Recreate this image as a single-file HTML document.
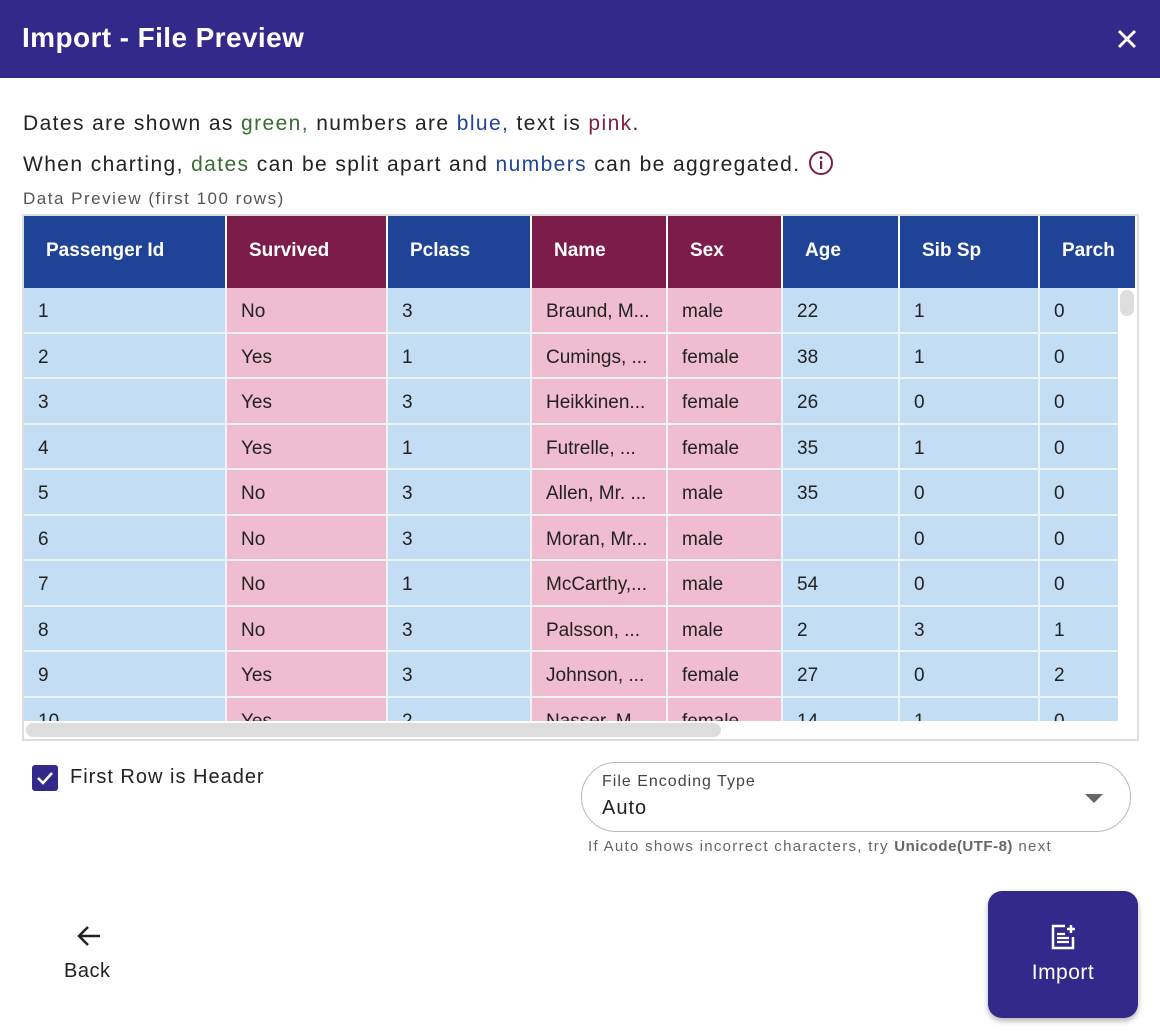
<!DOCTYPE html>
<html><head><style>
*{box-sizing:border-box;margin:0;padding:0}
body{width:1160px;height:1034px;background:#fff;font-family:"Liberation Sans",sans-serif;position:relative;overflow:hidden;color:#222}
.top{position:absolute;left:0;top:0;width:1160px;height:78px;background:#33298a;color:#fff;font-size:28px;font-weight:bold;padding:22px 0 0 22px;letter-spacing:0.4px}
.x{position:absolute;right:22px;top:28px;}
.p{position:absolute;left:23px;font-size:21px;color:#222;letter-spacing:1.4px;white-space:nowrap}
.g{color:#3a6b35}.b{color:#1f4497}.k{color:#7b1c4a}
.tbl{position:absolute;left:22px;top:214px;width:1117px;height:527px;border:2px solid #ddd;overflow:hidden}
.row{position:absolute;left:0;height:45.5px;width:1100px}
.c{position:absolute;top:0;height:100%;border-right:2px solid #eef3f8;border-bottom:2px solid #eef3f8;font-size:19px;padding:13px 0 0 14px;white-space:nowrap;overflow:hidden}
.h .c{font-weight:bold;color:#fff;padding-top:24px;padding-left:22px;border-color:#fff;border-bottom:none}
.B{background:#c3ddf5}.P{background:#f0bccf}
.h .B{background:#1f4497}.h .P{background:#7b1c4a}
</style></head><body>
<div class="top">Import - File Preview
<svg class="x" width="22" height="22" viewBox="0 0 22 22"><path d="M3 3L19 19M19 3L3 19" stroke="#fff" stroke-width="3"/></svg></div>
<div class="p" style="top:112px">Dates are shown as <span class="g">green,</span> numbers are <span class="b">blue,</span> text is <span class="k">pink</span>.</div>
<div class="p" style="top:150px">When charting, <span class="g">dates</span> can be split apart and <span class="b">numbers</span> can be aggregated.
<svg width="26" height="26" viewBox="0 0 26 26" style="vertical-align:-5px;margin-left:0px"><circle cx="13" cy="13" r="11" fill="none" stroke="#7b1c4a" stroke-width="2"/><rect x="12" y="11" width="2.2" height="8" fill="#7b1c4a"/><circle cx="13.1" cy="7.8" r="1.4" fill="#7b1c4a"/></svg></div>
<div class="p" style="top:189px;font-size:17px;color:#555;letter-spacing:1.5px">Data Preview (first 100 rows)</div>
<div class="tbl" id="t"></div>
<script>
var cols=[[0,203,'B'],[203,161,'P'],[364,144,'B'],[508,136,'P'],[644,115,'P'],[759,117,'B'],[876,140,'B'],[1016,80,'B']];
var hd=['Passenger Id','Survived','Pclass','Name','Sex','Age','Sib Sp','Parch'];
var d=[['1','No','3','Braund, M...','male','22','1','0'],['2','Yes','1','Cumings, ...','female','38','1','0'],['3','Yes','3','Heikkinen...','female','26','0','0'],['4','Yes','1','Futrelle, ...','female','35','1','0'],['5','No','3','Allen, Mr. ...','male','35','0','0'],['6','No','3','Moran, Mr...','male','','0','0'],['7','No','1','McCarthy,...','male','54','0','0'],['8','No','3','Palsson, ...','male','2','3','1'],['9','Yes','3','Johnson, ...','female','27','0','2'],['10','Yes','2','Nasser, M...','female','14','1','0']];
var h='<div class="row h" style="top:0;height:72px;width:1117px">';
cols.forEach(function(c,i){h+='<div class="c '+c[2]+'" style="left:'+c[0]+'px;width:'+(i==7?97:c[1])+'px">'+hd[i]+'</div>'});
h+='</div>';
d.forEach(function(r,j){h+='<div class="row" style="top:'+(72+j*45.5)+'px">';cols.forEach(function(c,i){h+='<div class="c '+c[2]+'" style="left:'+c[0]+'px;width:'+c[1]+'px">'+r[i]+'</div>'});h+='</div>'});
h+='<div style="position:absolute;left:1094px;top:72px;width:19px;height:433px;background:#fff"><div style="margin:2px 0 0 2px;width:14px;height:26px;border-radius:7px;background:#ddd"></div></div>';
h+='<div style="position:absolute;left:0;top:505px;width:1117px;height:20px;background:#fff"><div style="margin:2px 0 0 2px;width:695px;height:14px;border-radius:7px;background:#ddd"></div></div>';
document.getElementById('t').innerHTML=h;
</script>
<div style="position:absolute;left:32px;top:765px;width:26px;height:26px;background:#33298a;border-radius:3px"><svg width="26" height="26"><path d="M6 13L11 18L20 8" stroke="#fff" stroke-width="2.5" fill="none"/></svg></div>
<div class="p" style="left:70px;top:766px;font-size:20px;letter-spacing:1px">First Row is Header</div>
<div style="position:absolute;left:581px;top:762px;width:550px;height:70px;border:1px solid #bbb;border-radius:35px">
<div style="position:absolute;left:20px;top:10px;font-size:16px;color:#444;letter-spacing:1px">File Encoding Type</div>
<div style="position:absolute;left:20px;top:34px;font-size:20px;color:#222;letter-spacing:1px">Auto</div>
<div style="position:absolute;right:27px;top:31px;border-left:9px solid transparent;border-right:9px solid transparent;border-top:9px solid #666"></div></div>
<div style="position:absolute;left:588px;top:838px;font-size:15px;color:#666;letter-spacing:1.3px;white-space:nowrap">If Auto shows incorrect characters, try <b style="letter-spacing:0.5px">Unicode(UTF-8)</b> next</div>
<svg style="position:absolute;left:76px;top:924px" width="26" height="24"><path d="M24 12H3M12 3L3 12L12 21" stroke="#222" stroke-width="2.5" fill="none"/></svg>
<div class="p" style="left:64px;top:960px;font-size:20px;letter-spacing:0.5px">Back</div>
<div style="position:absolute;left:988px;top:891px;width:150px;height:127px;background:#33298a;border-radius:14px;box-shadow:0 3px 6px rgba(0,0,0,.3);color:#fff;text-align:center">
<svg style="margin-top:32px" width="28" height="28" viewBox="0 0 28 28"><path d="M16 3H4V25H24V14" stroke="#fff" stroke-width="2.5" fill="none"/><path d="M8 11H16M8 15H20M8 19H20" stroke="#fff" stroke-width="2.2"/><path d="M22 2V10M18 6H26" stroke="#fff" stroke-width="2.5"/></svg>
<div style="font-size:21px;margin-top:5px;letter-spacing:0.5px">Import</div></div>
</body></html>
